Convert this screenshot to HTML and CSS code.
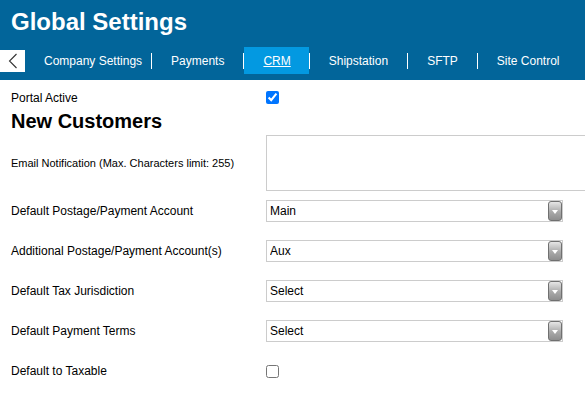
FILE: index.html
```html
<!DOCTYPE html>
<html>
<head>
<meta charset="utf-8">
<link rel="stylesheet" href="styles.css">
</head>
<body>
<header class="header">
  <h1 class="title">Global Settings</h1>
  <nav class="tabs">
    <button class="back" aria-label="Back">
      <svg width="25" height="22" viewBox="0 0 25 22"><path d="M16.5 4 L9.5 11 L16.5 18" fill="none" stroke="#333" stroke-width="1.1"/></svg>
    </button>
    <a class="tab tab-first">Company Settings</a>
    <span class="sep"></span>
    <a class="tab">Payments</a>
    <span class="sep"></span>
    <a class="tab active">CRM</a>
    <span class="sep"></span>
    <a class="tab">Shipstation</a>
    <span class="sep"></span>
    <a class="tab">SFTP</a>
    <span class="sep"></span>
    <a class="tab">Site Control</a>
  </nav>
</header>
<main class="content">
  <div class="row row-portal">
    <label class="label">Portal Active</label>
    <input type="checkbox" class="check" checked>
  </div>
  <h2 class="section">New Customers</h2>
  <div class="row row-email">
    <label class="label label-small">Email Notification (Max. Characters limit: 255)</label>
    <textarea class="textarea"></textarea>
  </div>
  <div class="row">
    <label class="label">Default Postage/Payment Account</label>
    <span class="select-wrap"><select class="select"><option>Main</option></select><span class="arrow"></span></span>
  </div>
  <div class="row">
    <label class="label">Additional Postage/Payment Account(s)</label>
    <span class="select-wrap"><select class="select"><option>Aux</option></select><span class="arrow"></span></span>
  </div>
  <div class="row">
    <label class="label">Default Tax Jurisdiction</label>
    <span class="select-wrap"><select class="select"><option>Select</option></select><span class="arrow"></span></span>
  </div>
  <div class="row">
    <label class="label">Default Payment Terms</label>
    <span class="select-wrap"><select class="select"><option>Select</option></select><span class="arrow"></span></span>
  </div>
  <div class="row">
    <label class="label">Default to Taxable</label>
    <input type="checkbox" class="check">
  </div>
</main>
</body>
</html>
```
FILE: styles.css
```css
html, body {
  margin: 0;
  padding: 0;
  background: #fff;
  font-family: "Liberation Sans", Arial, sans-serif;
  color: #000;
  overflow: hidden;
}

.header {
  background: #02659a;
  height: 80px;
}

.title {
  margin: 0;
  padding-left: 11px;
  height: 44px;
  line-height: 44px;
  font-size: 24px;
  font-weight: bold;
  color: #fff;
}

.tabs {
  display: flex;
  align-items: center;
  height: 27px;
  padding-top: 3px;
  white-space: nowrap;
}

.back {
  width: 25px;
  height: 22px;
  padding: 0;
  margin: 0;
  border: 0;
  background: #fff;
  display: flex;
  align-items: center;
  justify-content: center;
}

.tab {
  display: flex;
  align-items: center;
  height: 27px;
  padding: 0 19px;
  font-size: 12px;
  color: #fff;
}

.tab-first {
  padding: 0 9px 0 19px;
}

.tab.active {
  background: #0399e1;
  text-decoration: underline;
  padding: 0 18px 0 19px;
}

.sep {
  width: 1px;
  height: 16px;
  background: #fff;
}

.content {
  padding: 8px 0 0 11px;
}

.row {
  display: flex;
  align-items: center;
  height: 40px;
}

.row-portal {
  height: 19px;
}

.row-email {
  height: 56px;
}

.label {
  width: 255px;
  flex: none;
  font-size: 12px;
}

.label-small {
  font-size: 11px;
}

.section {
  margin: 0;
  height: 28px;
  line-height: 28px;
  font-size: 20px;
  font-weight: bold;
}

.check {
  margin: 0;
  width: 13px;
  height: 13px;
}

.textarea {
  box-sizing: border-box;
  width: 330px;
  height: 56px;
  margin: 0;
  border: 1px solid #cccccc;
  resize: none;
  flex: none;
}

.select-wrap {
  position: relative;
  display: block;
  width: 297px;
  height: 22px;
}

.select {
  box-sizing: border-box;
  appearance: none;
  -webkit-appearance: none;
  width: 297px;
  height: 22px;
  margin: 0;
  padding: 0 0 0 3px;
  border: 1px solid #cccccc;
  border-radius: 0;
  background: #fff;
  font-family: "Liberation Sans", Arial, sans-serif;
  font-size: 12px;
  color: #000;
}

.arrow {
  position: absolute;
  right: 1px;
  top: 1px;
  box-sizing: border-box;
  width: 14px;
  height: 20px;
  border: 1px solid #707070;
  border-radius: 3px;
  background: linear-gradient(#e6e6e6, #a9a9a9 55%, #8e8e8e);
}

.arrow::after {
  content: "";
  position: absolute;
  left: 3px;
  top: 8px;
  border-left: 3px solid transparent;
  border-right: 3px solid transparent;
  border-top: 4px solid #fff;
}
```
